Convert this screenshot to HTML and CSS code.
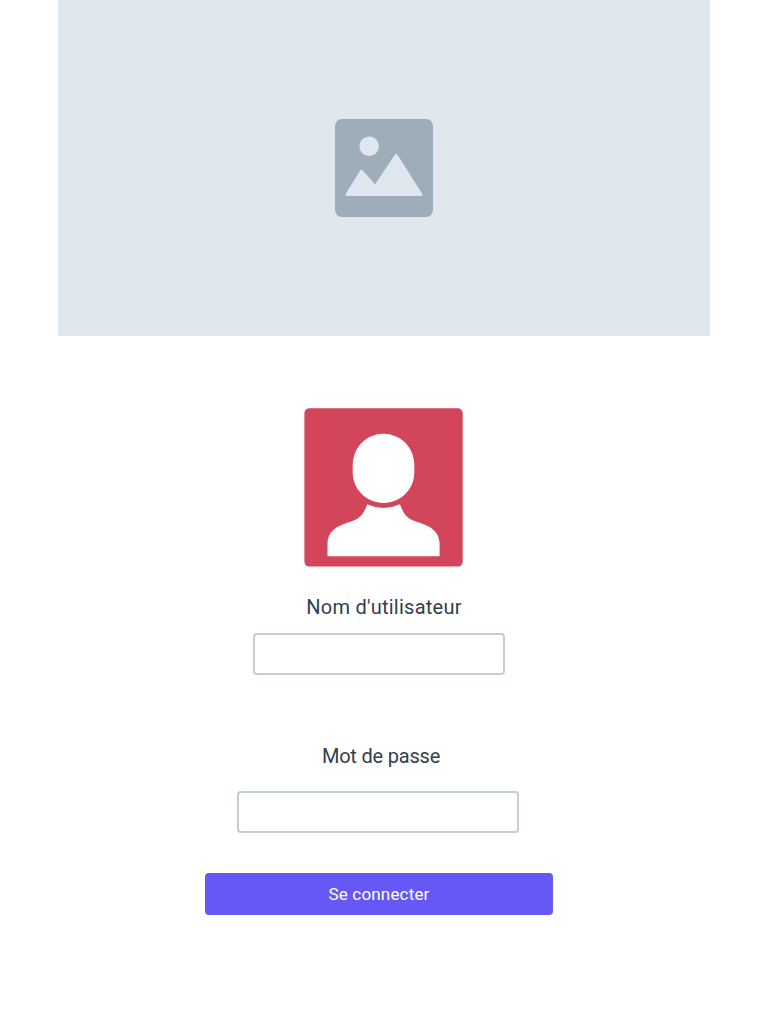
FILE: index.html
```html
<!DOCTYPE html>
<html lang="fr">
<head>
<meta charset="utf-8">
<title>Connexion</title>
<link rel="stylesheet" href="styles.css">
</head>
<body>
<main class="page">
  <div class="hero">
    <svg class="hero-icon" viewBox="0 0 98 98" aria-hidden="true">
      <rect class="hero-frame" width="98" height="98" rx="7"/>
      <circle class="hero-shape" cx="34.2" cy="27.2" r="9.8"/>
      <path class="hero-shape" d="M10.900 74.500 25 51.800Q26.300 49.800 28 51.800L40.100 65.200 59.700 36Q61.200 33.800 62.700 36L87 74.500Q88.100 77 85.700 77H12.200Q9.900 77 10.900 74.500Z"/>
    </svg>
  </div>
  <form class="login">
    <svg class="avatar" viewBox="0 0 160 160" aria-hidden="true">
      <rect class="avatar-tile" x="1.400" y="1.200" width="158.300" height="158.400" rx="5"/>
      <path class="avatar-person" d="M80.500 26.800C97.500 26.800 111.300 40.500 111.300 58.500V65.500C111.300 82 97.500 96 80.500 96S49.700 82 49.700 65.500V58.500C49.700 40.500 63.500 26.800 80.500 26.800Z"/>
      <path class="avatar-person" d="M64.200 97.200Q80.500 104.600 97 97.200C99.500 104.500 103 111 111 113.800C121 117.500 136.600 120.500 136.600 137.500V149.300H24.500V137.500C24.500 120.500 40 117.500 50 113.800C58 111 61.800 104.500 64.200 97.200Z"/>
    </svg>
    <label class="label" for="user">Nom d'utilisateur</label>
    <input class="field field-user" id="user" type="text">
    <label class="label label-password" for="password">Mot de passe</label>
    <input class="field field-password" id="password" type="password">
    <button class="submit" type="button">Se connecter</button>
  </form>
</main>
</body>
</html>
```

FILE: styles.css
```css
* { box-sizing: border-box; }

body {
  margin: 0;
  background: #fff;
  color: #2f404e;
  font-family: Roboto, "Liberation Sans", sans-serif;
}

.page {
  height: 1024px;
  overflow: hidden;
}

.hero {
  display: flex;
  align-items: center;
  justify-content: center;
  width: 652px;
  height: 336px;
  margin: 0 auto;
  background: #dfe6ee;
}

.hero-icon { width: 98px; height: 98px; }
.hero-frame { fill: #9eadba; }
.hero-shape { fill: #dfe6ee; }

.login {
  display: flex;
  flex-direction: column;
  align-items: center;
  width: 768px;
  padding-top: 71px;
}

.avatar { width: 160px; height: 160px; margin-right: 2px; }
.avatar-tile { fill: #d3455b; }
.avatar-person { fill: #fff; }

.label {
  height: 24px;
  margin-top: 28px;
  font-size: 20px;
  line-height: 24px;
  letter-spacing: 0.24px;
  white-space: nowrap;
}

.label-password {
  margin-top: 69px;
  margin-right: 6px;
  letter-spacing: -0.2px;
}

.field {
  height: 42px;
  padding: 0 10px;
  border: 2px solid #c3cdd7;
  border-radius: 4px;
  background: #fff;
  font: inherit;
  outline: none;
}

.field-user { width: 252px; margin: 14px 10px 0 0; }
.field-password { width: 282px; margin: 23px 12px 0 0; }

.submit {
  width: 348px;
  height: 42px;
  margin: 40px 10px 0 0;
  padding: 0;
  border: 0;
  border-radius: 4px;
  background: #6558f5;
  color: #fff;
  font: 17px/42px Roboto, "Liberation Sans", sans-serif;
  letter-spacing: 0.18px;
}
```
